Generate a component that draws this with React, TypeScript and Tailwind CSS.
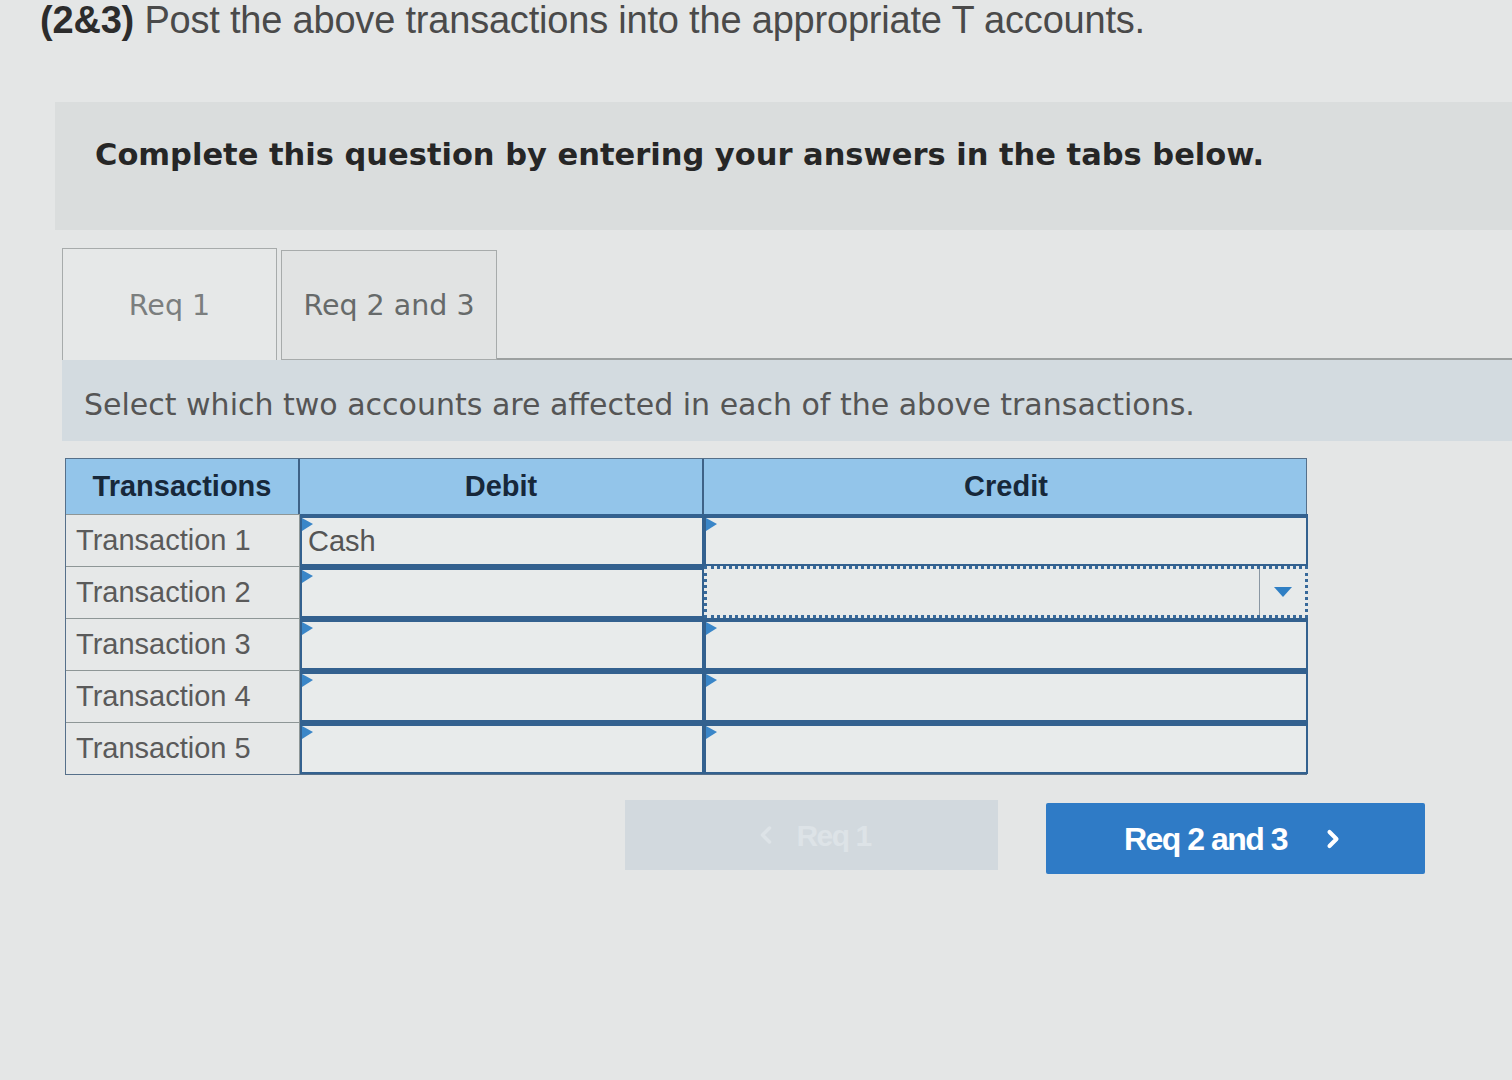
import { ChevronLeft, ChevronRight } from 'lucide-react';

const rows = ['Transaction 1', 'Transaction 2', 'Transaction 3', 'Transaction 4', 'Transaction 5'];

// small blue marker in the corner of each answer cell
const Marker = () => (
    <svg className="absolute left-0 top-0" width="12" height="14" viewBox="0 0 12 14">
        <path d="M0 0 L11 6 L0 13 Z" fill="#3a86c8" />
    </svg>
);

const AnswerCell = ({ value, focused }: { value?: string; focused?: boolean }) => (
    <div
        className={
            focused
                ? 'relative h-full border-[3px] border-dotted border-[#37699a] bg-[#e7eaea]'
                : 'relative h-full border-2 border-t-[4px] border-[#33618f] bg-[#e8ebeb]'
        }
    >
        {!focused && <Marker />}
        {value && (
            <span className="absolute left-[6px] top-1/2 -translate-y-1/2 text-[29px] text-[#555] leading-none">
                {value}
            </span>
        )}
        {focused && (
            <div className="absolute right-0 top-0 bottom-0 w-[46px] border-l border-[#8a97a3] flex items-center justify-center">
                <svg width="20" height="12" viewBox="0 0 20 12">
                    <path d="M1 1 L19 1 L10 11 Z" fill="#2f7fc4" />
                </svg>
            </div>
        )}
    </div>
);

export default function App() {
    return (
        <div className="w-[1512px] min-h-[1080px] bg-[#e4e6e6] overflow-hidden" style={{ fontFamily: '"Liberation Sans", Arial, sans-serif' }}>
            {/* Question heading */}
            <h1 className="pl-[40px] h-[40px] leading-[40px] text-[38px] text-[#4a4a4a] tracking-[-0.2px]">
                <span className="font-bold text-[#2c2c2c]">(2&amp;3)</span> Post the above transactions into the appropriate T accounts.
            </h1>

            {/* Instructions */}
            <div className="ml-[55px] mt-[62px] h-[128px] bg-[#dadddd] pl-[40px] pt-[33px]">
                <p className="font-['DejaVu_Sans',Verdana,sans-serif] font-bold text-[30.5px] leading-[40px] text-[#262626]">
                    Complete this question by entering your answers in the tabs below.
                </p>
            </div>

            <div className="ml-[62px] mt-[18px]">
                {/* Tabs */}
                <div className="flex items-end h-[112px]">
                    <div className="w-[215px] h-[112px] pt-[3px] border border-b-0 border-[#a7abab] bg-[#e6e8e8] flex items-center justify-center font-['DejaVu_Sans',Verdana,sans-serif] text-[28.5px] text-[#7b7e7e]">
                        Req 1
                    </div>
                    <div className="ml-[4px] w-[216px] h-[110px] pt-[3px] border border-[#a7abab] bg-[#e1e3e3] flex items-center justify-center font-['DejaVu_Sans',Verdana,sans-serif] text-[28.5px] text-[#666a6a]">
                        Req 2 and 3
                    </div>
                    <div className="flex-1 border-b-2 border-[#9ca0a0]" />
                </div>

                {/* Tab panel */}
                <div className="h-[81px] bg-[#d3dbe0] pl-[22px] pt-[25px]">
                    <p className="font-['DejaVu_Sans',Verdana,sans-serif] text-[30px] leading-[40px] text-[#555]">
                        Select which two accounts are affected in each of the above transactions.
                    </p>
                </div>

                {/* Accounts table */}
                <div className="ml-[3px] mt-[17px] w-[1242px] border border-[#56708a]">
                    <div className="grid grid-cols-[234px_404px_604px] h-[55px] bg-[#93c5ea] text-[29px] font-bold text-[#17283a]">
                        <div className="flex items-center justify-center border-r-2 border-[#3f6286]">Transactions</div>
                        <div className="flex items-center justify-center border-r-2 border-[#3f6286]">Debit</div>
                        <div className="flex items-center justify-center">Credit</div>
                    </div>
                    {rows.map((label, i) => (
                        <div key={label} className="grid grid-cols-[234px_404px_604px] h-[52px]">
                            <div className="flex items-center pl-[10px] border-t border-r border-[#8e9696] bg-[#e6e8e8] text-[29px] text-[#5a5a5a]">
                                {label}
                            </div>
                            <AnswerCell value={i === 0 ? 'Cash' : undefined} />
                            <AnswerCell focused={i === 1} />
                        </div>
                    ))}
                </div>

                {/* Navigation buttons */}
                <div className="flex mt-[25px] ml-[563px] gap-[48px]">
                    <button
                        type="button"
                        disabled
                        className="w-[373px] h-[70px] bg-[#d2d9de] flex items-center justify-center gap-4 text-[30px] font-bold text-[#dde3e7]"
                    >
                        <ChevronLeft size={28} strokeWidth={3} />
                        <span className="tracking-[-1.5px]">Req 1</span>
                    </button>
                    <button
                        type="button"
                        className="w-[379px] h-[71px] mt-[3px] bg-[#2f7bc6] rounded-[2px] flex items-center justify-center gap-8 text-[32px] font-bold text-white"
                    >
                        <span className="tracking-[-1.5px]">Req 2 and 3</span>
                        <ChevronRight size={28} strokeWidth={3.5} />
                    </button>
                </div>
            </div>
        </div>
    );
}
